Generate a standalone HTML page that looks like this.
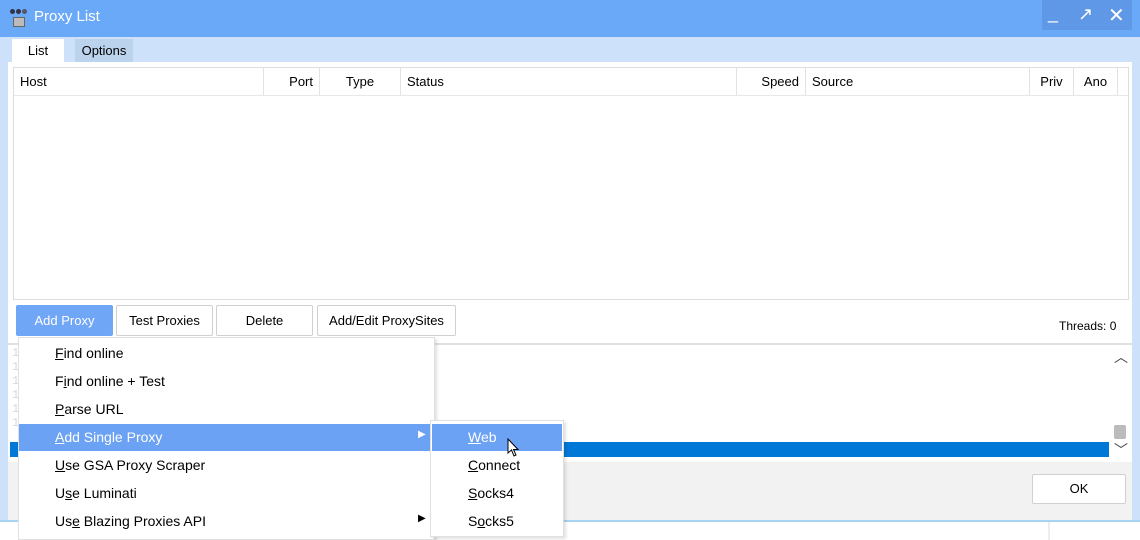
<!DOCTYPE html>
<html><head><style>
*{margin:0;padding:0;box-sizing:border-box}
body{width:1140px;height:540px;overflow:hidden;background:#fff;font-family:"Liberation Sans",sans-serif;font-size:13px;color:#000;position:relative}
.a{position:absolute}
.title{left:0;top:0;width:1140px;height:37px;background:#6aa8f8}
.tabs{left:0;top:37px;width:1140px;height:25px;background:#cde1fa}
.col{position:absolute;top:0;height:27px;border-right:1px solid #e3e3e3;line-height:27px;padding:0 6px;font-size:13px}
.btn{position:absolute;top:305px;height:31px;border:1px solid #d0d0d0;background:#fff;text-align:center;line-height:29px;font-size:13px;border-radius:2px}
.mi{position:absolute;left:55px;font-size:14px;height:28px;line-height:28px}
.log{position:absolute;left:12px;font-family:"Liberation Mono",monospace;font-size:12px;color:#d8d8d8;white-space:pre}
</style></head><body>
<div class="a" style="left:0;top:0;width:1140px;height:540px;background:#cde1fa"></div>
<div class="a title"></div>
<div class="a" style="left:1042px;top:0;width:90px;height:30px;background:#5f98e6"></div>
<div class="a" style="left:9px;top:8px;width:20px;height:20px">
<div class="a" style="left:1px;top:1px;width:5px;height:5px;border-radius:3px;background:#334"></div>
<div class="a" style="left:7px;top:1px;width:5px;height:5px;border-radius:3px;background:#334"></div>
<div class="a" style="left:13px;top:1px;width:5px;height:5px;border-radius:3px;background:#556"></div>
<div class="a" style="left:4px;top:9px;width:12px;height:10px;background:#bbb;border:1px solid #666"></div></div>
<div class="a" style="left:34px;top:8px;font-size:15px;color:#fff">Proxy List</div>
<div class="a" style="left:1048px;top:3px;color:#fff;font-size:18px">_</div>
<div class="a" style="left:1078px;top:4px;color:#fff;font-size:18px">↗</div>
<div class="a" style="left:1108px;top:3px;color:#fff;font-size:20px">✕</div>
<div class="a tabs"></div>
<div class="a" style="left:12px;top:39px;width:52px;height:23px;background:#fff;text-align:center;line-height:23px">List</div>
<div class="a" style="left:75px;top:39px;width:58px;height:23px;background:#bcd3ee;text-align:center;line-height:23px">Options</div>
<div class="a" style="left:8px;top:62px;width:1124px;height:459px;background:#fff"></div>
<div class="a" style="left:13px;top:67px;width:1116px;height:233px;border:1px solid #ddd;background:#fff">
<div class="a" style="left:0;top:0;width:1114px;height:28px;border-bottom:1px solid #e8e8e8">
<div class="col" style="left:0;width:250px">Host</div>
<div class="col" style="left:250px;width:56px;text-align:right">Port</div>
<div class="col" style="left:306px;width:81px;text-align:center">Type</div>
<div class="col" style="left:387px;width:336px">Status</div>
<div class="col" style="left:723px;width:69px;text-align:right">Speed</div>
<div class="col" style="left:792px;width:224px">Source</div>
<div class="col" style="left:1016px;width:44px;text-align:center">Priv</div>
<div class="col" style="left:1060px;width:44px;text-align:center">Ano</div>
</div></div>
<div class="btn" style="left:16px;width:97px;background:#6fa6f5;color:#fff;border-color:#6fa6f5">Add Proxy</div>
<div class="btn" style="left:116px;width:97px">Test Proxies</div>
<div class="btn" style="left:216px;width:97px">Delete</div>
<div class="btn" style="left:317px;width:139px">Add/Edit ProxySites</div>
<div class="a" style="left:1059px;top:319px;font-size:12px">Threads: 0</div>
<div class="a" style="left:8px;top:343px;width:1124px;height:2px;background:#e0e0e0"></div>
<div class="log" style="top:346px">17:31 Finished. 0/1 tested proxies seem to work.
17:32 Testing 1 proxies...
17:32 Waiting for last threads to finish...
17:32 Finished. 0/1 tested proxies seem to work.
17:32 Testing 1 proxies...
17:32 Waiting for last threads to finish...</div>
<div class="a" style="left:10px;top:442px;width:1099px;height:15px;background:#0078d7"></div>
<div class="a" style="left:1114px;top:347px;font-size:14px;color:#444">︿</div>
<div class="a" style="left:1114px;top:425px;width:12px;height:14px;background:#bbb;border-radius:2px"></div>
<div class="a" style="left:1114px;top:440px;font-size:14px;color:#444">﹀</div>
<div class="a" style="left:8px;top:462px;width:1124px;height:58px;background:#f2f2f2"></div>
<div class="a" style="left:10px;top:465px;width:190px;height:22px;color:#ccc;font-size:13px;line-height:22px;padding-left:20px">Checked</div>
<div class="a" style="left:110px;top:467px;width:90px;height:18px;background:#e6f6e6"></div>
<div class="a" style="left:10px;top:490px;width:190px;height:22px;color:#ccc;font-size:13px;line-height:22px;padding-left:12px">Unchecked</div>
<div class="a" style="left:110px;top:493px;width:90px;height:18px;background:#fbe3e3"></div>
<div class="a" style="left:1032px;top:474px;width:94px;height:30px;border:1px solid #d0d0d0;background:#fff;text-align:center;line-height:28px;border-radius:2px">OK</div>
<div class="a" style="left:0;top:520px;width:1140px;height:2px;background:#a9d3f2"></div>
<div class="a" style="left:0;top:522px;width:1140px;height:18px;background:#fff"></div>
<div class="a" style="left:1048px;top:522px;width:2px;height:18px;background:#eee"></div>
<!-- menu -->
<div class="a" style="left:18px;top:337px;width:417px;height:203px;background:#fff;border:1px solid #e0e0e0;box-shadow:2px 2px 3px rgba(0,0,0,.12)"></div>
<div class="a" style="left:19px;top:424px;width:415px;height:27px;background:#6ca2f4"></div>
<div class="mi" style="top:339px"><u>F</u>ind online</div>
<div class="mi" style="top:367px">F<u>i</u>nd online + Test</div>
<div class="mi" style="top:395px"><u>P</u>arse URL</div>
<div class="mi" style="top:423px;color:#fff"><u>A</u>dd Single Proxy</div>
<div class="mi" style="top:451px"><u>U</u>se GSA Proxy Scraper</div>
<div class="mi" style="top:479px">U<u>s</u>e Luminati</div>
<div class="mi" style="top:507px">Us<u>e</u> Blazing Proxies API</div>
<div class="a" style="left:418px;top:429px;font-size:10px;color:#fff">▶</div>
<div class="a" style="left:418px;top:513px;font-size:10px">▶</div>
<div class="a" style="left:430px;top:420px;width:134px;height:117px;background:#fff;border:1px solid #e0e0e0;box-shadow:2px 2px 3px rgba(0,0,0,.12)"></div>
<div class="a" style="left:432px;top:424px;width:130px;height:27px;background:#6ca2f4"></div>
<div class="mi" style="left:468px;top:423px;color:#fff"><u>W</u>eb</div>
<div class="mi" style="left:468px;top:451px"><u>C</u>onnect</div>
<div class="mi" style="left:468px;top:479px"><u>S</u>ocks4</div>
<div class="mi" style="left:468px;top:507px">S<u>o</u>cks5</div>
<svg class="a" style="left:507px;top:438px" width="14" height="20" viewBox="0 0 14 20"><path d="M1 1 L1 15 L4.5 12 L7 18 L9 17 L6.5 11.5 L11 11.5 Z" fill="#fff" stroke="#000" stroke-width="1"/></svg>
</body></html>
